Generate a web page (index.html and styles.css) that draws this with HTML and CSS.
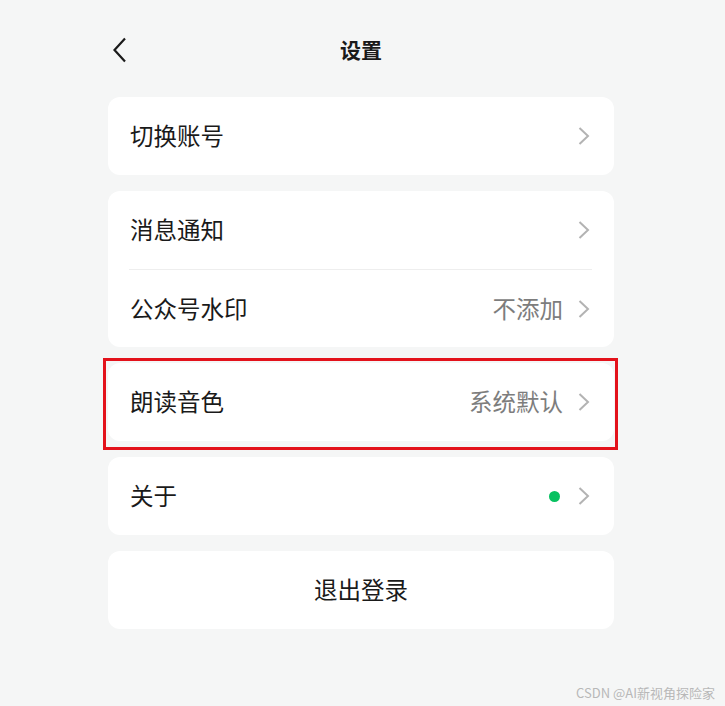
FILE: index.html
```html
<!DOCTYPE html>
<html lang="zh-CN">
<head>
<meta charset="utf-8">
<link rel="stylesheet" href="styles.css">
</head>
<body>
<div class="page">
  <header class="header">
    <svg class="back" width="16" height="26" viewBox="0 0 16 26"><path d="M13 1.5 L2.5 13 L13 24.5" fill="none" stroke="#1a1a1a" stroke-width="2.2"/></svg>
    <h1 class="title">设置</h1>
  </header>
  <main class="list">
    <section class="card">
      <div class="row"><span class="label">切换账号</span><span class="right"><svg class="chev" width="12" height="18" viewBox="0 0 12 18"><path d="M1.5 1 L10 9 L1.5 17" fill="none" stroke="#b3b3b3" stroke-width="2"/></svg></span></div>
    </section>
    <section class="card">
      <div class="row"><span class="label">消息通知</span><span class="right"><svg class="chev" width="12" height="18" viewBox="0 0 12 18"><path d="M1.5 1 L10 9 L1.5 17" fill="none" stroke="#b3b3b3" stroke-width="2"/></svg></span></div>
      <div class="divider"></div>
      <div class="row short"><span class="label">公众号水印</span><span class="right"><span class="value">不添加</span><svg class="chev" width="12" height="18" viewBox="0 0 12 18"><path d="M1.5 1 L10 9 L1.5 17" fill="none" stroke="#b3b3b3" stroke-width="2"/></svg></span></div>
    </section>
    <section class="card highlighted">
      <div class="row"><span class="label">朗读音色</span><span class="right"><span class="value">系统默认</span><svg class="chev" width="12" height="18" viewBox="0 0 12 18"><path d="M1.5 1 L10 9 L1.5 17" fill="none" stroke="#b3b3b3" stroke-width="2"/></svg></span></div>
    </section>
    <section class="card">
      <div class="row"><span class="label">关于</span><span class="right"><span class="dot"></span><svg class="chev" width="12" height="18" viewBox="0 0 12 18"><path d="M1.5 1 L10 9 L1.5 17" fill="none" stroke="#b3b3b3" stroke-width="2"/></svg></span></div>
    </section>
    <section class="card">
      <div class="row center"><span class="label">退出登录</span></div>
    </section>
  </main>
</div>
<div class="watermark">CSDN @AI新视角探险家</div>
</body>
</html>
```

FILE: styles.css
```css
* { box-sizing: border-box; }
html, body {
  margin: 0;
  padding: 0;
  background: #f5f6f6;
  font-family: "Noto Sans CJK SC", "Noto Sans", sans-serif;
  color: #1a1a1a;
}
body {
  width: 725px;
  height: 706px;
  position: relative;
  overflow: hidden;
}
.page {
  width: 506px;
  margin-left: 108px;
}
.header {
  height: 97px;
  display: flex;
  align-items: center;
  justify-content: center;
  position: relative;
}
.back {
  position: absolute;
  left: 4px;
  top: 37px;
}
.title {
  margin: 2px 0 0 0;
  font-size: 21px;
  font-weight: 700;
  line-height: 1;
}
.list {
  display: flex;
  flex-direction: column;
  gap: 16px;
}
.card {
  background: #ffffff;
  border-radius: 12px;
  position: relative;
}
.row {
  height: 78px;
  display: flex;
  align-items: center;
  justify-content: space-between;
  padding: 0 24px 0 22px;
}
.row.short { height: 77px; }
.row.center { justify-content: center; padding: 0; }
.label {
  font-size: 23.5px;
  line-height: 1;
  color: #1a1a1a;
}
.right {
  display: flex;
  align-items: center;
}
.value {
  font-size: 23.5px;
  line-height: 1;
  color: #7d7d7d;
  margin-right: 15px;
}
.chev { display: block; }
.dot {
  width: 11px;
  height: 11px;
  border-radius: 50%;
  background: #07c160;
  margin-right: 18px;
}
.divider {
  height: 1px;
  background: #eeeeee;
  margin: 0 22px 0 21px;
}
.highlighted::after {
  content: "";
  position: absolute;
  left: -5px;
  right: -4px;
  top: -5px;
  bottom: -9px;
  border: 3px solid #e3121b;
  pointer-events: none;
}
.watermark {
  position: absolute;
  right: 10px;
  bottom: 7px;
  font-size: 13px;
  color: #b8b8b8;
  line-height: 1;
}
```
